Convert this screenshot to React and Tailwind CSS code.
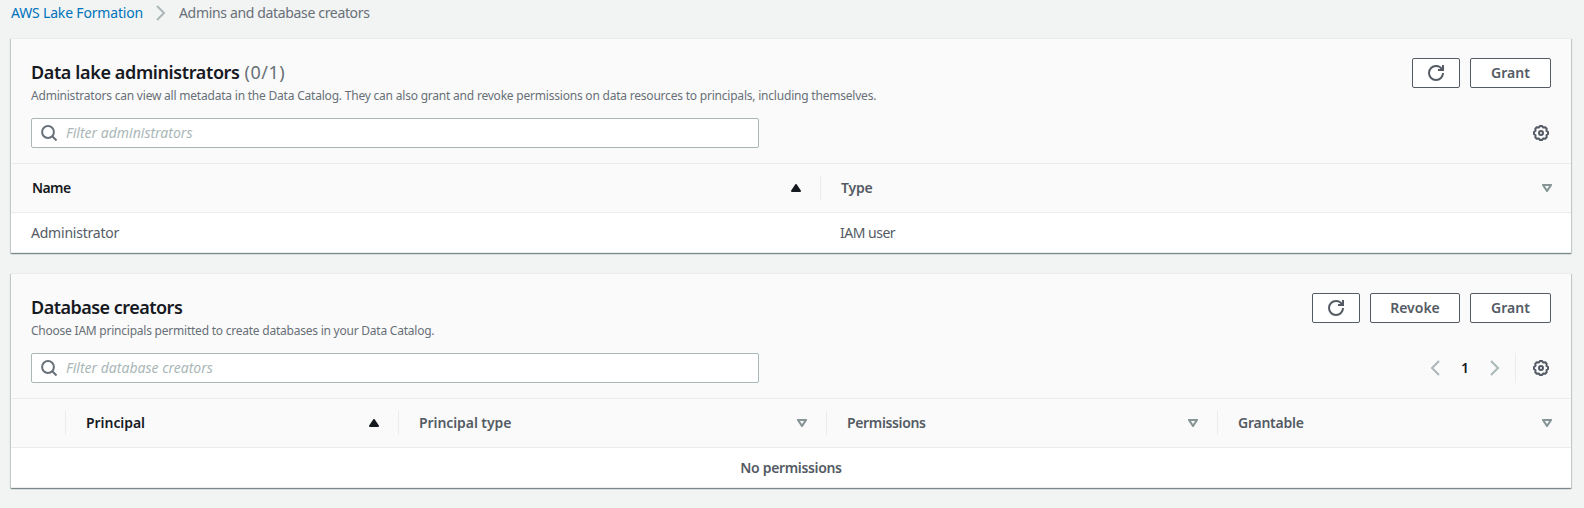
import { useState } from "react";

function ChevronRight({ className = "" }) {
  return (
    <svg className={className} width="16" height="16" viewBox="0 0 16 16" fill="none" stroke="#aab7b8" strokeWidth="2">
      <path d="M4 1l7 7-7 7" />
    </svg>
  );
}

function ChevronLeft() {
  return (
    <svg width="16" height="16" viewBox="0 0 16 16" fill="none" stroke="#aab7b8" strokeWidth="2">
      <path d="M12 1L5 8l7 7" />
    </svg>
  );
}

function RefreshIcon() {
  return (
    <svg width="16" height="16" viewBox="0 0 16 16" fill="none" stroke="#545b64" strokeWidth="2">
      <path d="M15 8c0 3.9-3.1 7-7 7s-7-3.1-7-7 3.1-7 7-7c2.8 0 5.2 1.600 6.300 4" />
      <path d="M10 5h5V0" />
    </svg>
  );
}

function GearIcon() {
  return (
    <svg width="16" height="16" viewBox="0 0 16 16" fill="none" stroke="#545b64" strokeWidth="2" strokeLinejoin="round">
      <path d="M15 9L13.450 10.260 13.670 12.270 12.270 13.670 10.260 13.450 9 15H7L5.740 13.450 3.730 13.670 2.330 12.270 2.550 10.260 1 9V7L2.550 5.740 2.330 3.730 3.730 2.330 5.740 2.550 7 1H9L10.260 2.550 12.270 2.330 13.670 3.730 13.450 5.740 15 7z" />
      <circle cx="8" cy="8" r="2" />
    </svg>
  );
}

function SearchIcon() {
  return (
    <svg className="shrink-0" width="16" height="16" viewBox="0 0 16 16" fill="none" stroke="#687078" strokeWidth="2">
      <circle cx="7" cy="7" r="5.900" />
      <path d="M11 11l4.500 4.500" />
    </svg>
  );
}

function SortIcon({ sorted }) {
  return (
    <svg className="shrink-0" width="10" height="8" viewBox="0 0 10 8">
      {sorted ? (
        <path d="M5 1L9 7H1z" fill="#16191f" stroke="#16191f" strokeWidth="2" strokeLinejoin="round" />
      ) : (
        <path d="M1 1h8L5 7z" fill="none" stroke="#879596" strokeWidth="2.200" strokeLinejoin="round" />
      )}
    </svg>
  );
}

function Button({ className, children }) {
  return (
    <button className={`flex h-[30px] items-center justify-center rounded-[2px] border border-[#545b64] bg-white text-sm leading-[22px] font-semibold text-[#545b64] ${className}`}>
      {children}
    </button>
  );
}

function Filter({ placeholder }) {
  const [value, setValue] = useState("");
  return (
    <label className="flex h-[30px] w-[728px] items-center gap-[9px] rounded-[2px] border border-[#aab7b8] bg-white pl-[9px]">
      <SearchIcon />
      <input
        value={value}
        onChange={(e) => setValue(e.target.value)}
        placeholder={placeholder}
        className="w-full bg-transparent text-sm leading-[22px] text-[#16191f] outline-none placeholder:text-[#aab7b8] placeholder:italic"
      />
    </label>
  );
}

function HeadCell({ label, sorted, divider = true, className }) {
  return (
    <div className={`flex h-6 items-center justify-between text-sm leading-[22px] font-semibold ${sorted ? "text-[#16191f]" : "text-[#545b64]"} ${divider ? "border-r border-[#eaeded]" : ""} ${className}`}>
      <span>{label}</span>
      <SortIcon sorted={sorted} />
    </div>
  );
}

function Panel({ title, count, description, descriptionClass, actions, filter, tools, head, children }) {
  return (
    <section className="border-t border-[#eaeded] bg-white shadow-[0_1px_1px_0_rgba(0,28,36,0.3),1px_1px_1px_0_rgba(0,28,36,0.15),-1px_1px_1px_0_rgba(0,28,36,0.15)]">
      <header className="h-[125px] border-b border-[#eaeded] bg-[#fafafa] px-5 pt-[19px]">
        <div className="flex h-[60px] justify-between">
          <div>
            <h2 className="flex h-[30px] items-center gap-[5px] pb-[3px] text-lg leading-[22px] whitespace-nowrap">
              {title}
              {count}
            </h2>
            <p className={`text-xs leading-4 whitespace-nowrap text-[#687078] ${descriptionClass}`}>{description}</p>
          </div>
          <div className="flex gap-2.5">{actions}</div>
        </div>
        <div className="flex items-center justify-between">
          {filter}
          {tools}
        </div>
      </header>
      <div className="flex h-[49px] items-center border-b border-[#eaeded] bg-[#fafafa]">{head}</div>
      <div className="flex h-10 items-center border-b border-[#eaeded] text-sm leading-[22px] text-[#545b64]">{children}</div>
    </section>
  );
}

export default function App() {
  return (
    <div className="h-[508px] w-[1584px] overflow-hidden bg-[#f2f3f3] pr-[13px] pl-[11px] font-['Noto_Sans','Open_Sans',sans-serif]">
      <nav className="flex h-[38px] items-start pt-[2px] text-sm leading-[22px] whitespace-nowrap">
        <a href="#" className="w-[131px] tracking-[-0.18px] text-[#0073bb]">AWS Lake Formation</a>
        <ChevronRight className="mt-[3px] mr-[10px] ml-[11px]" />
        <span className="tracking-[-0.34px] text-[#687078]">Admins and database creators</span>
      </nav>
      <main className="flex flex-col gap-5">
        <Panel
          title={<span className="font-semibold tracking-[-0.38px] text-[#16191f]">Data lake administrators</span>}
          count={<span className="tracking-[0.5px] text-[#687078]">(0/1)</span>}
          description="Administrators can view all metadata in the Data Catalog. They can also grant and revoke permissions on data resources to principals, including themselves."
          descriptionClass="tracking-[-0.21px]"
          actions={
            <>
              <Button className="w-12"><RefreshIcon /></Button>
              <Button className="w-[81px]">Grant</Button>
            </>
          }
          filter={<Filter placeholder="Filter administrators" />}
          tools={<button className="mr-0.5"><GearIcon /></button>}
          head={
            <>
              <HeadCell label="Name" sorted className="w-[810px] pr-[19px] pl-[21px] tracking-[-0.6px]" />
              <HeadCell label="Type" divider={false} className="flex-1 pr-[19px] pl-5 tracking-[-0.2px]" />
            </>
          }
        >
          <span className="w-[809px] pl-5 tracking-[-0.22px]">Administrator</span>
          <span className="pl-5 tracking-[-0.5px]">IAM user</span>
        </Panel>
        <Panel
          title={<span className="font-semibold tracking-[-0.52px] text-[#16191f]">Database creators</span>}
          description="Choose IAM principals permitted to create databases in your Data Catalog."
          descriptionClass="tracking-[-0.23px]"
          actions={
            <>
              <Button className="w-12"><RefreshIcon /></Button>
              <Button className="w-[90px]">Revoke</Button>
              <Button className="w-[81px]">Grant</Button>
            </>
          }
          filter={<Filter placeholder="Filter database creators" />}
          tools={
            <div className="flex h-[30px] items-center">
              <ChevronLeft />
              <span className="w-[44px] text-center text-sm font-semibold text-[#16191f]">1</span>
              <ChevronRight />
              <span className="mr-[17px] ml-[12px] h-[30px] w-px bg-[#eaeded]" />
              <button className="mr-0.5"><GearIcon /></button>
            </div>
          }
          head={
            <>
              <div className="h-6 w-[55px] border-r border-[#eaeded]" />
              <HeadCell label="Principal" sorted className="w-[333px] pr-[19px] pl-5 tracking-[-0.05px]" />
              <HeadCell label="Principal type" className="w-[428px] pr-[19px] pl-5 tracking-[-0.08px]" />
              <HeadCell label="Permissions" className="w-[391px] pr-[19px] pl-5 tracking-[-0.36px]" />
              <HeadCell label="Grantable" divider={false} className="flex-1 pr-[19px] pl-5 tracking-[-0.25px]" />
            </>
          }
        >
          <span className="w-full text-center font-semibold tracking-[-0.34px]">No permissions</span>
        </Panel>
      </main>
    </div>
  );
}
